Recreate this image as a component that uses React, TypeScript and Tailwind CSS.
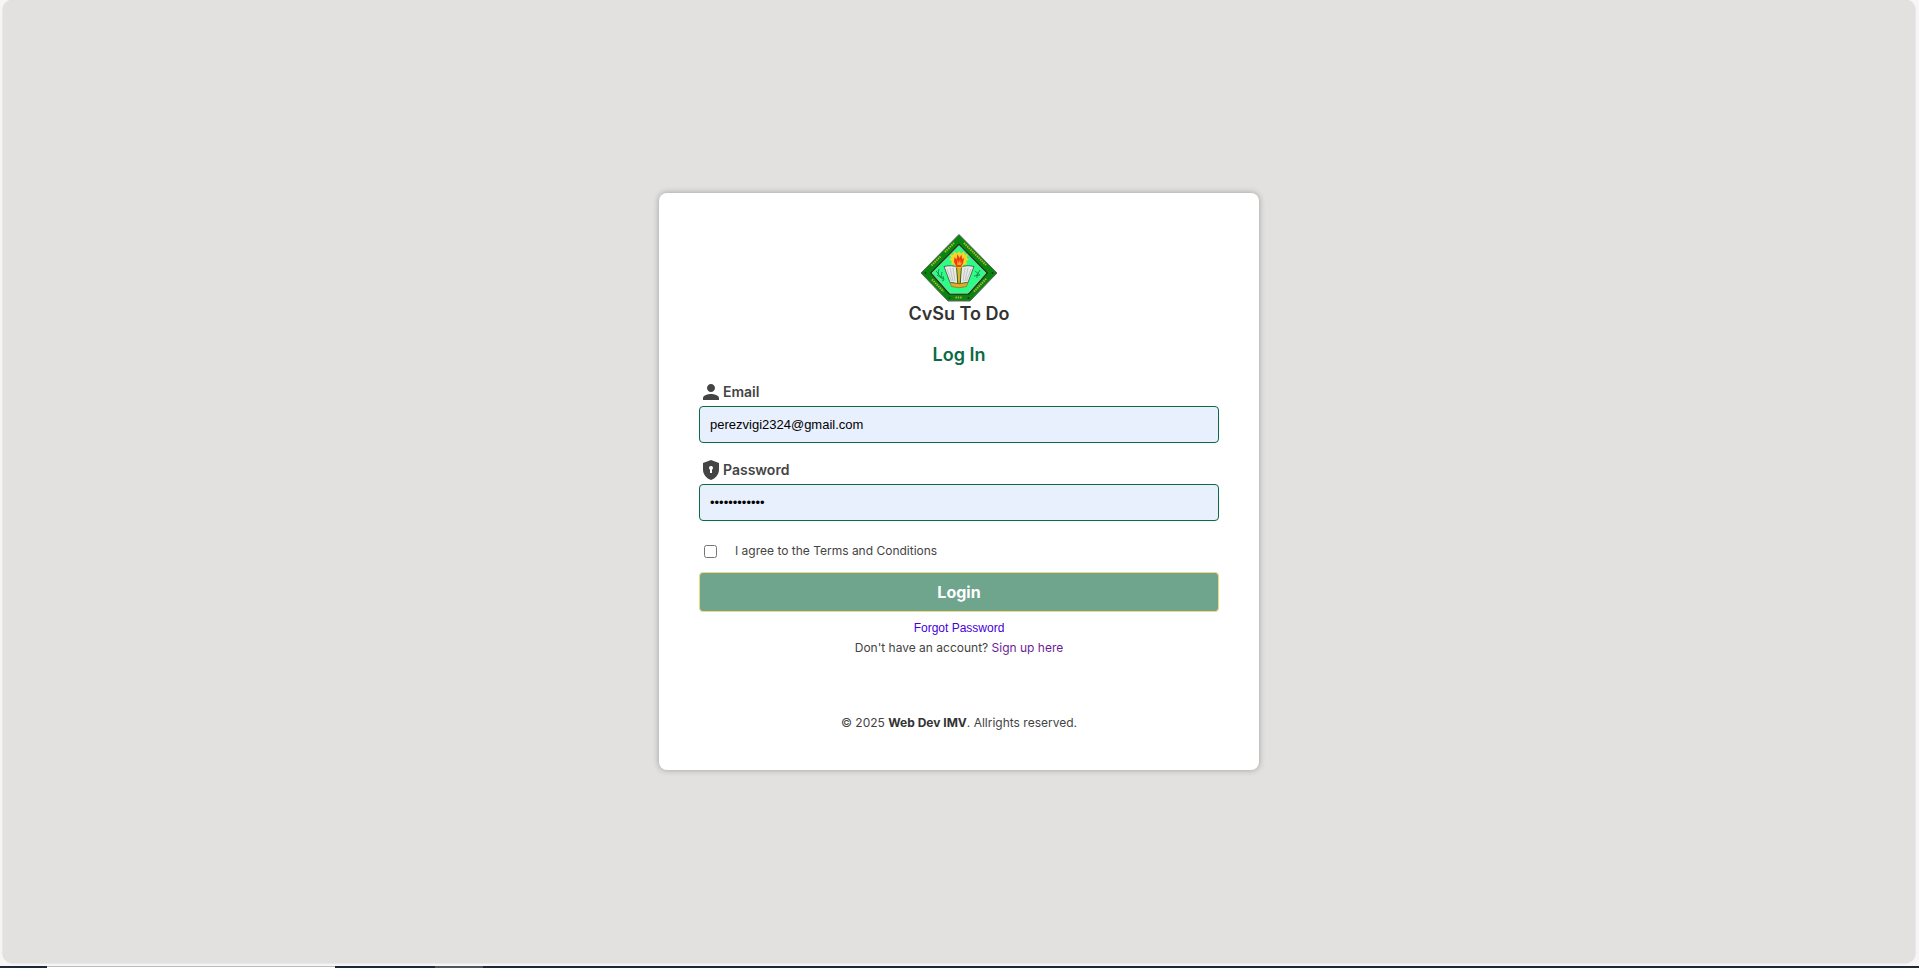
import { useState } from "react";
import { MdPerson } from "react-icons/md";

function Emblem() {
  return (
    <svg viewBox="0 0 80 70" className="h-[70px] w-20" role="img" aria-label="University emblem">
      <path d="M40 1.500 L78 40 L51 68 L29 68 L2 40 Z" fill="#0a8510" stroke="#5a665a" strokeWidth="1" />
      <path d="M40 11.500 L68 40 L49.500 61 L30.500 61 L12 40 Z" fill="#2dfd86" stroke="#123d19" strokeWidth="1.600" />
      <path d="M40 12.500 L67 40 L49 60.200 L31 60.200 L13 40 Z" fill="none" stroke="#a9c9b4" strokeWidth="0.800" />
      <g stroke="#b9b834" strokeWidth="2" fill="none" strokeDasharray="1.400 0.900">
        <path d="M12.500 32.500 L21.500 23.500 M26 19 L35 10" />
        <path d="M45 10 L67 32" />
        <path d="M13 46.500 L24.500 58.500 M55 58.500 L67.500 45.500" />
        <path d="M36.500 64.500 L43.500 64.500" />
      </g>
      <g fill="#17351a">
        <circle cx="6.500" cy="40" r="1" />
        <circle cx="73.500" cy="40" r="1" />
        <circle cx="30.500" cy="65" r="1" />
        <circle cx="49.500" cy="65" r="1" />
      </g>
      <g stroke="#1f7a44" strokeWidth="0.800" fill="none">
        <path d="M17 38l3 3-2 2M20 36l-1 5 3 3M23 39l-1 5 3 2M24 43l1 4-2 1M18 42l6 4" />
        <path d="M56 38l5 4M61 37l-3 5M55 43l6-1M58 41v4" />
      </g>
      <g stroke="#3d4c43" strokeWidth="0.800">
        <path d="M25 33.500 Q33 31.500 38.500 34.500 L38.500 51 Q34 49 31 49.500 Z" fill="#e9e9e6" />
        <path d="M55 33.500 Q47 31.500 41.500 34.500 L41.500 51 Q46 49 49 49.500 Z" fill="#e9e9e6" />
      </g>
      <path d="M28 36l4.500 12M31 35l3 13M34 35l2 13M52 36l-4.500 12M49 35l-3 13M46 35l-2 13" stroke="#b0b4b1" strokeWidth="0.700" />
      <path d="M37.500 33.500h5l-1.300 17h-2.400z" fill="#d7b52b" stroke="#39681d" strokeWidth="1" />
      <path d="M31 49.500 Q40 52 49 49.500 L47.500 53.500 Q40 56 32.500 53.500 Z" fill="#e0ac2c" stroke="#7c641c" strokeWidth="0.600" />
      <path d="M40 18l2 2.500 3.200-2 .5 3.200 3.200-.2-1.300 3 2.200 2.100-2.600 1.700.6 3.200-3.300.2-1.700 2.800h-5.600l-1.700-2.800-3.300-.2.6-3.200-2.600-1.700 2.200-2.100-1.300-3 3.200.2.500-3.200 3.200 2z" fill="#f8d423" />
      <path d="M37.500 34 L35 29l.5-5 2 2.500 1-5.500 2 4 2-3.500.6 4.500 2-1-1 5-2 4z" fill="#ee3d14" />
      <path d="M38.300 32v-5l1.500 3 1.300-4 .3 4 1.500-1-1 3z" fill="#ffa51b" />
    </svg>
  );
}

function ShieldKeyhole() {
  return (
    <svg viewBox="0 0 24 24" className="size-6" fill="#444444" aria-hidden="true">
      <path fillRule="evenodd" d="M12 2 20 5v6.600C20 16.500 16.600 20.700 12 22 7.400 20.700 4 16.500 4 11.600V5zM12 8a2 2 0 0 0-1 3.730V15h2v-3.270A2 2 0 0 0 12 8z" />
    </svg>
  );
}

export default function App() {
  const [agreed, setAgreed] = useState(false);
  return (
    <div className="flex min-h-screen flex-col bg-[#f6f6f6] font-['Inter',sans-serif] text-[#444444]">
      <main className="mr-1 mb-[3px] ml-[3px] flex flex-1 items-center justify-center rounded-[10px] bg-[#e2e1df] shadow-[0_0_2px_rgba(0,0,0,0.2)]">
        <div className="w-full max-w-[600px] rounded-lg bg-white p-10 shadow-[0_0_6px_rgba(0,0,0,0.3)]">
          <header className="flex flex-col items-center">
            <Emblem />
            <h1 className="text-lg leading-[22px] font-semibold text-[#333333]">CvSu To Do</h1>
          </header>
          <form onSubmit={(e) => e.preventDefault()} className="flex flex-col">
            <h2 className="mt-[18px] text-center text-lg leading-6 font-semibold text-[#0b6b43]">Log In</h2>
            <label htmlFor="email" className="mt-[13px] flex h-6 items-center text-sm font-semibold">
              <MdPerson className="size-6 text-[#444444]" />
              Email
            </label>
            <input id="email" type="email" defaultValue="perezvigi2324@gmail.com" className="mt-0.5 h-[37px] w-full rounded border border-[#0b6b43] bg-[#e8effd] px-2.5 font-['Liberation_Sans',sans-serif] text-[13px] text-black outline-none" />
            <label htmlFor="password" className="mt-[15px] flex h-6 items-center text-sm font-semibold">
              <ShieldKeyhole />
              Password
            </label>
            <input id="password" type="password" defaultValue="abcdefghijkl" className="mt-0.5 h-[37px] w-full rounded border border-[#0b6b43] bg-[#e8effd] px-2.5 font-['Liberation_Sans',sans-serif] text-[13px] text-black outline-none" />
            <div className="mt-5 flex h-5 items-center gap-[18px] pl-[5px]">
              <input id="terms" type="checkbox" checked={agreed} onChange={(e) => setAgreed(e.target.checked)} className="size-[13px]" />
              <label htmlFor="terms" className="text-xs">I agree to the Terms and Conditions</label>
            </div>
            <button type="submit" className="mt-[11px] h-10 w-full rounded border border-[#f2d97a] bg-[#6fa48d] text-base font-bold text-white">Login</button>
            <div className="mt-1.5 flex flex-col items-center text-xs leading-5">
              <a href="#forgot" className="font-['Liberation_Sans',sans-serif] text-[#4400dd]">Forgot Password</a>
              <p>Don't have an account? <a href="#signup" className="text-[#6a1b9a]">Sign up here</a></p>
            </div>
          </form>
          <footer className="mt-[58px] text-center text-xs leading-[14px]">
            © 2025 <strong className="text-[#333333]">Web Dev IMV</strong>. Allrights reserved.
          </footer>
        </div>
      </main>
      <div className="flex h-0.5 bg-[#1b2a36]" aria-hidden="true">
        <div className="ml-[47px] w-72 border-t border-[#bbbbbb] bg-white" />
        <div className="ml-[100px] w-12 bg-[#4b5661]" />
      </div>
    </div>
  );
}
